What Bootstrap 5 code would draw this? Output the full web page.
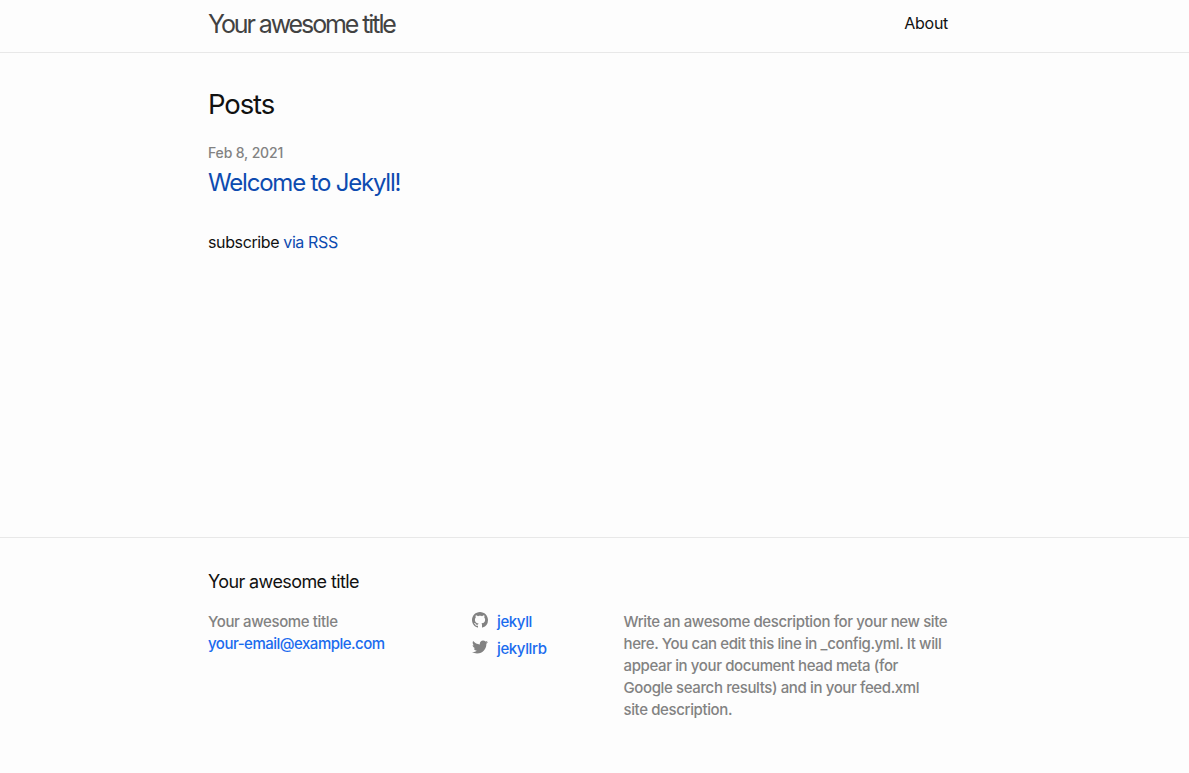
<!DOCTYPE html>
<html lang="en">
<head>
<meta charset="utf-8">
<meta name="viewport" content="width=device-width, initial-scale=1">
<title>Your awesome title</title>
<link href="https://cdn.jsdelivr.net/npm/bootstrap@5.3.0/dist/css/bootstrap.min.css" rel="stylesheet">
<style>
body{font:16px/24px Inter,"Liberation Sans",sans-serif;color:#111;background:#fdfdfd;height:773px;overflow:hidden}
a{text-decoration:none}
.wrap{width:740px;margin-left:208px}
.site-head{height:53px;border-bottom:1px solid #e8e8e8}
.site-title{font-size:25px;line-height:48px;font-weight:400;color:#424242;letter-spacing:-2.1px}
.about{line-height:46px;color:#111;letter-spacing:-.3px}
h1{font-size:27.5px;line-height:36px;font-weight:400;margin:33px 0 19px;letter-spacing:-1.1px}
.date{font-size:14px;line-height:24px;font-weight:450;color:#828282;display:block;letter-spacing:-.15px}
.post{font-size:24px;line-height:36px;letter-spacing:-1.2px;color:#0d4bb0}
.rss{margin-top:29px;letter-spacing:-.38px}
.rss a{color:#0d4bb0}
.site-foot{height:236px;border-top:1px solid #e8e8e8;font-size:15px;font-weight:450;line-height:22px;color:#828282;letter-spacing:-.38px}
.site-foot h2{font-size:18px;line-height:27px;font-weight:400;color:#111;margin:30px 0 16px;letter-spacing:-.6px}
.site-foot a{color:#1a6bee}
.site-foot .mail{letter-spacing:-.5px}
.c1{width:264px}.c2{width:151.5px}
.social{height:27px}
.social svg{width:16px;height:16px;fill:#828282;margin:1px 9px 0 0}
</style>
</head>
<body class="d-flex flex-column">
<header class="site-head"><div class="wrap d-flex justify-content-between"><a class="site-title" href="#"><span>Your awesome title</span></a><a class="about" href="#"><span>About</span></a></div></header>
<main class="wrap flex-grow-1">
<h1><span>Posts</span></h1>
<span class="date"><span>Feb 8, 2021</span></span>
<a class="post d-block" href="#"><span>Welcome to Jekyll!</span></a>
<p class="rss"><span>subscribe </span><a href="#">via RSS</a></p>
</main>
<footer class="site-foot"><div class="wrap">
<h2><span>Your awesome title</span></h2>
<div class="d-flex">
<div class="c1 flex-shrink-0"><div>Your awesome title</div><a class="mail" href="#">your-email@example.com</a></div>
<div class="c2 flex-shrink-0">
<div class="social d-flex"><svg viewBox="0 0 16 16"><path d="M8 0C3.580 0 0 3.580 0 8c0 3.540 2.290 6.530 5.470 7.590.4.070.550-.170.550-.380 0-.190-.010-.820-.010-1.490-2.010.370-2.530-.490-2.690-.940-.090-.230-.480-.940-.820-1.130-.280-.150-.680-.520-.010-.530.630-.010 1.080.580 1.230.820.720 1.210 1.870.870 2.330.660.070-.520.280-.870.510-1.070-1.780-.200-3.640-.890-3.640-3.950 0-.870.310-1.590.820-2.150-.080-.200-.360-1.020.080-2.120 0 0 .670-.210 2.200.820.640-.180 1.320-.270 2-.270s1.360.090 2 .270c1.530-1.040 2.200-.820 2.200-.820.440 1.100.160 1.920.080 2.120.510.560.820 1.270.820 2.150 0 3.070-1.870 3.750-3.650 3.950.290.250.540.730.540 1.480 0 1.070-.010 1.930-.010 2.200 0 .210.150.460.550.380A8 8 0 0 0 16 8c0-4.420-3.580-8-8-8Z"/></svg><a href="#">jekyll</a></div>
<div class="social d-flex"><svg viewBox="0 0 16 16"><path d="M15.969 3.058c-.586.26-1.217.436-1.878.515.675-.405 1.194-1.045 1.438-1.809-.632.375-1.332.647-2.076.793-.596-.636-1.446-1.033-2.387-1.033-1.806 0-3.270 1.464-3.270 3.270 0 .256.029.506.085.745C5.163 5.404 2.753 4.102 1.140 2.124c-.281.482-.443 1.044-.443 1.644 0 1.134.577 2.135 1.455 2.722-.536-.017-1.040-.164-1.481-.409v.041c0 1.584 1.127 2.906 2.623 3.206-.274.075-.563.115-.861.115-.211 0-.416-.021-.615-.059.416 1.299 1.624 2.245 3.055 2.271-1.119.877-2.529 1.400-4.061 1.400-.264 0-.524-.015-.780-.046 1.447.928 3.166 1.469 5.013 1.469 6.015 0 9.304-4.983 9.304-9.304 0-.142-.003-.283-.009-.423.639-.461 1.193-1.037 1.631-1.692Z"/></svg><a href="#">jekyllrb</a></div>
</div>
<div class="c3 text-nowrap">Write an awesome description for your new site<br>here. You can edit this line in _config.yml. It will<br>appear in your document head meta (for<br>Google search results) and in your feed.xml<br>site description.</div>
</div>
</div></footer>
<script src="https://cdn.jsdelivr.net/npm/bootstrap@5.3.0/dist/js/bootstrap.bundle.min.js"></script>
</body>
</html>
